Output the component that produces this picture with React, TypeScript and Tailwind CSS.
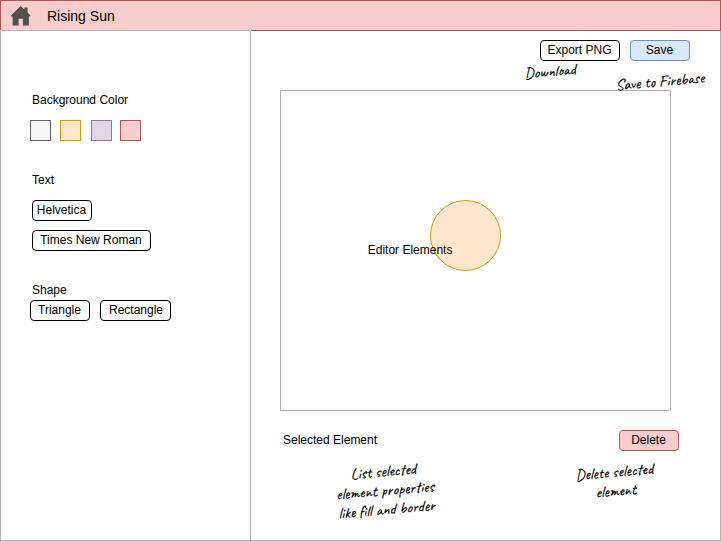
import type { ReactNode } from 'react';

function Button({ children, className }: { children: ReactNode; className: string }) {
  return (
    <button
      type="button"
      className={`flex h-[21px] shrink-0 items-center justify-center whitespace-nowrap rounded-[4px] border pb-px text-[12px] leading-[14px] text-black ${className}`}
    >
      {children}
    </button>
  );
}

function Label({ children, className = '' }: { children: ReactNode; className?: string }) {
  return <div className={`flex h-5 items-center whitespace-nowrap text-[12px] leading-[14px] ${className}`}>{children}</div>;
}

// A handwritten note, centred on its anchor point.
function Scribble({ children, className }: { children: ReactNode; className: string }) {
  return (
    <div
      className={`pointer-events-none absolute -translate-x-1/2 -translate-y-1/2 rotate-[-5deg] whitespace-nowrap text-center font-['Caveat',cursive] text-[16px] font-medium leading-[19px] text-black [-webkit-text-stroke:0.15px_black] ${className}`}
    >
      {children}
    </div>
  );
}

function HomeIcon() {
  return (
    <svg className="h-5 w-5 shrink-0" viewBox="0 0 20 20" aria-hidden="true">
      <path d="M9.6 0 L13.4 3.6 V1.5 H16.6 V6.6 L19.6 9.7 L18.8 10.5 H17.9 V19.6 H11.9 V12.8 H7.6 V19.6 H1.6 V10.5 H0.4 L-0.2 9.7 Z" fill="#505050" />
    </svg>
  );
}

export default function App() {
  return (
    <div className="relative flex h-[541px] w-[721px] flex-col overflow-hidden bg-white font-['Liberation_Sans',Helvetica,Arial,sans-serif] text-black">
      <header className="flex h-[31px] shrink-0 items-center gap-4 border border-[#b85450] bg-[#f8cecc] pl-[10px]">
        <HomeIcon />
        <h1 className="text-[14px] leading-4">Rising Sun</h1>
      </header>

      <div className="flex min-h-0 flex-1">
        <aside className="relative -mt-px w-[251px] shrink-0 border border-[#b3b3b3] bg-white pl-[29px] pt-[59px]">
          <Label className="pl-[2px]">Background Color</Label>
          <div className="mt-[10px] flex">
            <div className="h-[21px] w-[21px] border border-[#666666] bg-[#f5f5f5]" />
            <div className="ml-[9px] h-[21px] w-[21px] border border-[#d79b00] bg-[#ffe6cc]" />
            <div className="ml-[10px] h-[21px] w-[21px] border border-[#9673a6] bg-[#e1d5e7]" />
            <div className="ml-[8px] h-[21px] w-[21px] border border-[#b85450] bg-[#f8cecc]" />
          </div>

          <Label className="mt-[29px] pl-[2px]">Text</Label>
          <div className="mt-[10px] flex flex-col gap-[9px] pl-[2px]">
            <Button className="w-[60px] border-black bg-white pr-px">Helvetica</Button>
            <Button className="w-[119px] border-black bg-white pr-px">Times New Roman</Button>
          </div>

          <Label className="mt-[29px] pl-[2px]">Shape</Label>
          <div className="flex gap-[10px]">
            <Button className="w-[60px] border-black bg-white pr-px">Triangle</Button>
            <Button className="w-[71px] border-black bg-white pl-px">Rectangle</Button>
          </div>
        </aside>

        <main className="flex flex-1 flex-col border-b border-r border-[#b3b3b3] pl-[29px] pt-[9px]">
          <div className="flex justify-end gap-[10px] pr-[30px]">
            <Button className="w-[80px] border-black bg-white pr-px">Export PNG</Button>
            <Button className="w-[60px] border-[#6c8ebf] bg-[#dae8fc] pr-px">Save</Button>
          </div>

          <section className="relative mt-[29px] h-[321px] w-[391px] shrink-0 border border-[#b3b3b3] bg-white">
            <div className="absolute left-[149px] top-[109px] h-[71px] w-[71px] rounded-full border border-[#d79b00] bg-[#ffe6cc]" />
            <Label className="absolute left-[86.75px] top-[149px]">Editor Elements</Label>
          </section>

          <div className="mt-[19px] flex items-start justify-between pl-[3px] pr-[41px]">
            <Label>Selected Element</Label>
            <Button className="w-[60px] border-[#b85450] bg-[#f8cecc] pr-px">Delete</Button>
          </div>
        </main>
      </div>

      <Scribble className="left-[550px] top-[72px]">Download</Scribble>
      <Scribble className="left-[660px] top-[82px]">Save to Firebase</Scribble>
      <Scribble className="left-[385px] top-[491px]">
        List selected
        <br />
        element properties
        <br />
        like fill and border
      </Scribble>
      <Scribble className="left-[615px] top-[482px]">
        Delete selected
        <br />
        element
      </Scribble>
    </div>
  );
}
